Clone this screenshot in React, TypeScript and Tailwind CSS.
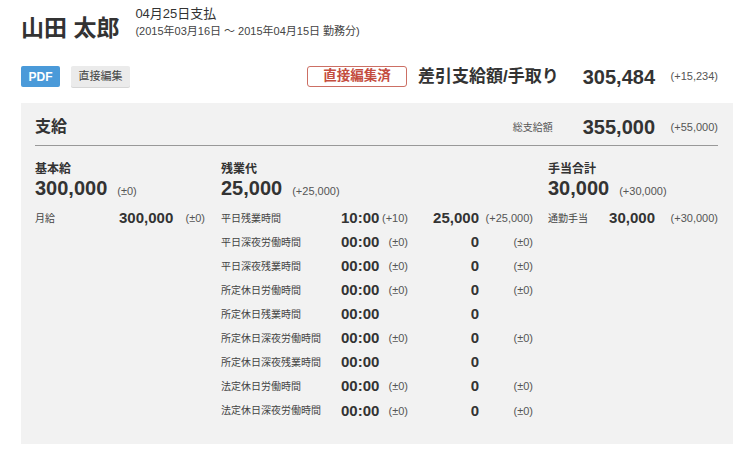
const font = "font-['Liberation_Sans','Noto_Sans_CJK_JP',sans-serif]";

type Row = { label: string; time: string; timeDiff?: string; amount: string; amountDiff?: string };

const overtimeRows: Row[] = [
  { label: '平日残業時間', time: '10:00', timeDiff: '(+10)', amount: '25,000', amountDiff: '(+25,000)' },
  { label: '平日深夜労働時間', time: '00:00', timeDiff: '(±0)', amount: '0', amountDiff: '(±0)' },
  { label: '平日深夜残業時間', time: '00:00', timeDiff: '(±0)', amount: '0', amountDiff: '(±0)' },
  { label: '所定休日労働時間', time: '00:00', timeDiff: '(±0)', amount: '0', amountDiff: '(±0)' },
  { label: '所定休日残業時間', time: '00:00', amount: '0' },
  { label: '所定休日深夜労働時間', time: '00:00', timeDiff: '(±0)', amount: '0', amountDiff: '(±0)' },
  { label: '所定休日深夜残業時間', time: '00:00', amount: '0' },
  { label: '法定休日労働時間', time: '00:00', timeDiff: '(±0)', amount: '0', amountDiff: '(±0)' },
  { label: '法定休日深夜労働時間', time: '00:00', timeDiff: '(±0)', amount: '0', amountDiff: '(±0)' },
];

function ColumnHead({ title, amount, diff }: { title: string; amount: string; diff: string }) {
  return (
    <div>
      <div className="text-[12px] font-bold leading-[16px]">{title}</div>
      <div className="flex items-baseline">
        <span className="text-[20px] font-bold leading-[23px]">{amount}</span>
        <span className="ml-[10px] text-[11px] text-[#555]">{diff}</span>
      </div>
    </div>
  );
}

export default function App() {
  return (
    <div className={`min-h-screen bg-white text-[#333] ${font}`}>
      {/* 見出し */}
      <header className="flex items-start px-[21px] pt-[6px]">
        <h1 className="mt-[7px] text-[23px] font-bold leading-[30px]">山田 太郎</h1>
        <div className="ml-[16px]">
          <div className="text-[13px] leading-[16px]">04月25日支払</div>
          <div className="mt-[2px] text-[11px] leading-[14px] text-[#444]">
            (2015年03月16日 〜 2015年04月15日 勤務分)
          </div>
        </div>
      </header>

      {/* 操作・手取り */}
      <div className="mt-[23px] flex h-[21px] items-center justify-between pl-[21px] pr-[36px]">
        <div className="flex items-center">
          <button className="h-[21px] w-[39px] rounded-[2px] bg-[#4a9ad9] text-[12px] font-bold text-white">
            PDF
          </button>
          <button className="ml-[11px] h-[21px] w-[59px] rounded-[2px] bg-[#ebebeb] text-[11px] text-[#444] shadow-[0_1px_0_#d6d6d6]">
            直接編集
          </button>
        </div>
        <div className="flex items-center">
          <span className="flex h-[21px] w-[100px] items-center justify-center rounded-[3px] border border-[#cc6f64] text-[13.5px] font-bold text-[#c44d3f]">
            直接編集済
          </span>
          <span className="ml-[11px] text-[17px] font-bold">差引支給額/手取り</span>
          <span className="ml-[24px] text-[20px] font-bold">305,484</span>
          <span className="w-[63px] text-right text-[11px] text-[#555]">(+15,234)</span>
        </div>
      </div>

      {/* 支給 */}
      <section className="mx-[21px] mt-[16px] bg-[#f2f2f2] pb-[21px] pl-[14px] pr-[15px] pt-[12px]">
        <div className="flex h-[31px] items-start justify-between border-b border-[#999]">
          <h2 className="text-[16px] font-bold leading-[24px]">支給</h2>
          <div className="flex h-[24px] items-center">
            <span className="text-[10px] text-[#555]">総支給額</span>
            <span className="ml-[30px] text-[20px] font-bold">355,000</span>
            <span className="w-[63px] text-right text-[11px] text-[#555]">(+55,000)</span>
          </div>
        </div>

        <div className="grid grid-cols-[186px_327px_1fr] pt-[15px]">
          {/* 基本給 */}
          <div>
            <ColumnHead title="基本給" amount="300,000" diff="(±0)" />
            <div className="mt-[6px] flex h-[24px] items-center">
              <span className="w-[84px] text-[10px] text-[#444]">月給</span>
              <span className="w-[54px] text-right text-[15px] font-bold">300,000</span>
              <span className="w-[32px] text-right text-[11px] text-[#555]">(±0)</span>
            </div>
          </div>

          {/* 残業代 */}
          <div>
            <ColumnHead title="残業代" amount="25,000" diff="(+25,000)" />
            <div className="mt-[6px]">
              {overtimeRows.map((r) => (
                <div key={r.label} className="flex h-[24.1px] items-center">
                  <span className="w-[120px] text-[10px] text-[#444]">{r.label}</span>
                  <span className="w-[37px] text-right text-[15px] font-bold">{r.time}</span>
                  <span className="w-[30px] text-right text-[11px] text-[#555]">{r.timeDiff}</span>
                  <span className="w-[71px] text-right text-[15px] font-bold">{r.amount}</span>
                  <span className="w-[54px] text-right text-[11px] text-[#555]">{r.amountDiff}</span>
                </div>
              ))}
            </div>
          </div>

          {/* 手当合計 */}
          <div>
            <ColumnHead title="手当合計" amount="30,000" diff="(+30,000)" />
            <div className="mt-[6px] flex h-[24px] items-center">
              <span className="w-[60px] text-[10px] text-[#444]">通勤手当</span>
              <span className="w-[47px] text-right text-[15px] font-bold">30,000</span>
              <span className="w-[63px] text-right text-[11px] text-[#555]">(+30,000)</span>
            </div>
          </div>
        </div>
      </section>
    </div>
  );
}
